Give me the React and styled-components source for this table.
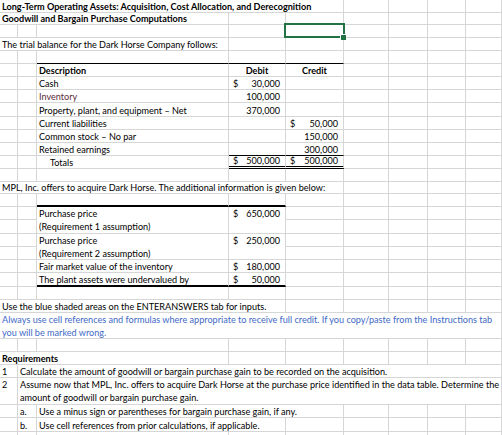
import React from 'react';
import styled, { createGlobalStyle } from 'styled-components';

const COLS = [18, 19, 192, 57, 58, 45, 39, 38, 36];
const ROWS = [13, 12, 13, 13, 13, 13, 13, 13, 14, 13, 13, 13, 13, 13, 12, 13, 13, 14, 13, 13, 13, 14, 13, 13, 13, 13, 13, 13, 13, 14, 13, 13, 14, 13];
const GRID = '#d6d6d6';

const Global = createGlobalStyle`
  html, body { margin: 0; padding: 0; background: #fff; }
  body { font-family: Lato, "Liberation Sans", sans-serif; }
`;

const Sheet = styled.div`
  display: grid;
  grid-template-columns: ${COLS.map((c) => `${c}px`).join(' ')};
  grid-template-rows: ${ROWS.map((r) => `${r}px`).join(' ')};
  width: 502px;
  height: 435px;
  overflow: hidden;
  font-family: Lato, "Liberation Sans", sans-serif;
  font-size: 9.1px;
  color: #000;
  background: #fff;
`;

const bottoms = {
  grid: `1px solid ${GRID}`,
  thin: '1px solid #000',
  thick: '2px solid #000',
  double: '3px double #000',
};

const Cell = styled.div`
  grid-column: ${(p) => `${p.$c} / span ${p.$cs || 1}`};
  grid-row: ${(p) => `${p.$r} / span ${p.$rs || 1}`};
  box-sizing: border-box;
  min-width: 0;
  display: flex;
  align-items: ${(p) => (p.$wrap ? 'flex-start' : 'flex-end')};
  justify-content: ${(p) => (p.$align === 'center' ? 'center' : 'flex-start')};
  padding: 0 2px 0 ${(p) => 2 + (p.$indent || 0)}px;
  border-right: 1px solid ${GRID};
  border-bottom: ${(p) => bottoms[p.$bottom || 'grid']};
  overflow: hidden;
  white-space: nowrap;
  line-height: ${(p) => (p.$wrap ? '13px' : '11px')};
  font-weight: ${(p) => (p.$bold ? 700 : 400)};
  color: ${(p) => p.$color || '#000'};
`;

const AmountCell = styled(Cell)`
  justify-content: space-between;
  padding: 0 5px 0 4px;
`;

const SelectedCell = styled(Cell)`
  position: relative;
  overflow: visible;
  z-index: 2;
  &::before {
    content: '';
    position: absolute;
    left: -2px;
    top: -2px;
    right: -2px;
    bottom: -1px;
    border: 2px solid #217346;
  }
  &::after {
    content: '';
    position: absolute;
    right: -3px;
    bottom: -3px;
    width: 5px;
    height: 5px;
    background: #217346;
    box-shadow: -1px -1px 0 #fff;
  }
`;

const Dollar = styled.span``;
const Value = styled.span``;

const BLUE = '#4169c6';

const cells = [
  { r: 1, c: 1, cs: 5, bold: true, text: 'Long-Term Operating Assets: Acquisition, Cost Allocation, and Derecognition' },
  { r: 2, c: 1, cs: 3, bold: true, text: 'Goodwill and Bargain Purchase Computations' },
  { r: 3, c: 5, selected: true },
  { r: 4, c: 1, cs: 3, text: 'The trial balance for the Dark Horse Company follows:' },
  { r: 5, c: 3, bottom: 'thin' },
  { r: 5, c: 4, bottom: 'thin' },
  { r: 5, c: 5, bottom: 'thin' },
  { r: 6, c: 3, bold: true, text: 'Description' },
  { r: 6, c: 4, bold: true, align: 'center', text: 'Debit' },
  { r: 6, c: 5, bold: true, align: 'center', text: 'Credit' },
  { r: 7, c: 3, text: 'Cash' },
  { r: 7, c: 4, amount: ['$', '30,000'] },
  { r: 8, c: 3, text: 'Inventory', color: '#5e2b3a' },
  { r: 8, c: 4, amount: ['', '100,000'] },
  { r: 9, c: 3, text: 'Property, plant, and equipment \u2013 Net' },
  { r: 9, c: 4, amount: ['', '370,000'] },
  { r: 10, c: 3, text: 'Current liabilities' },
  { r: 10, c: 5, amount: ['$', '50,000'] },
  { r: 11, c: 3, text: 'Common stock \u2013 No par' },
  { r: 11, c: 5, amount: ['', '150,000'] },
  { r: 12, c: 3, text: 'Retained earnings' },
  { r: 12, c: 4, bottom: 'thin' },
  { r: 12, c: 5, amount: ['', '300,000'], bottom: 'thin' },
  { r: 13, c: 3, text: 'Totals', indent: 11 },
  { r: 13, c: 4, amount: ['$', '500,000'], bottom: 'double' },
  { r: 13, c: 5, amount: ['$', '500,000'], bottom: 'double' },
  { r: 15, c: 1, cs: 5, text: 'MPL, Inc. offers to acquire Dark Horse. The additional information is given below:' },
  { r: 16, c: 3, bottom: 'thick' },
  { r: 16, c: 4, bottom: 'thick' },
  { r: 17, c: 3, rs: 2, wrap: true, lines: ['Purchase price', '(Requirement 1 assumption)'] },
  { r: 17, c: 4, rs: 2, wrap: true, amount: ['$', '650,000'] },
  { r: 19, c: 3, rs: 2, wrap: true, lines: ['Purchase price', '(Requirement 2 assumption)'] },
  { r: 19, c: 4, rs: 2, wrap: true, amount: ['$', '250,000'] },
  { r: 21, c: 3, text: 'Fair market value of the inventory' },
  { r: 21, c: 4, amount: ['$', '180,000'] },
  { r: 22, c: 3, text: 'The plant assets were undervalued by', bottom: 'thick' },
  { r: 22, c: 4, amount: ['$', '50,000'], bottom: 'thick' },
  { r: 24, c: 1, cs: 4, text: 'Use the blue shaded areas on the ENTERANSWERS tab for inputs.' },
  {
    r: 25, c: 1, cs: 9, rs: 2, wrap: true, color: BLUE,
    lines: ['Always use cell references and formulas where appropriate to receive full credit. If you copy/paste from the Instructions tab', 'you will be marked wrong.'],
  },
  { r: 28, c: 1, cs: 3, bold: true, text: 'Requirements' },
  { r: 29, c: 1, text: '1' },
  { r: 29, c: 2, cs: 8, text: 'Calculate the amount of goodwill or bargain purchase gain to be recorded on the acquisition.' },
  { r: 30, c: 1, rs: 2, wrap: true, lines: ['2'] },
  {
    r: 30, c: 2, cs: 8, rs: 2, wrap: true,
    lines: ['Assume now that MPL, Inc. offers to acquire Dark Horse at the purchase price identified in the data table. Determine the', 'amount of goodwill or bargain purchase gain.'],
  },
  { r: 32, c: 2, text: 'a.' },
  { r: 32, c: 3, cs: 3, text: 'Use a minus sign or parentheses for bargain purchase gain, if any.' },
  { r: 33, c: 2, text: 'b.' },
  { r: 33, c: 3, cs: 2, text: 'Use cell references from prior calculations, if applicable.' },
];

function buildCells() {
  const taken = new Set();
  cells.forEach((cell) => {
    for (let r = cell.r; r < cell.r + (cell.rs || 1); r += 1) {
      for (let c = cell.c; c < cell.c + (cell.cs || 1); c += 1) taken.add(`${r}-${c}`);
    }
  });
  const all = [...cells];
  for (let r = 1; r <= ROWS.length; r += 1) {
    for (let c = 1; c <= COLS.length; c += 1) {
      if (!taken.has(`${r}-${c}`)) all.push({ r, c });
    }
  }
  return all;
}

function renderCell(cell) {
  const key = `${cell.r}-${cell.c}`;
  const common = {
    key,
    $r: cell.r,
    $c: cell.c,
    $rs: cell.rs,
    $cs: cell.cs,
    $bottom: cell.bottom,
    $bold: cell.bold,
    $align: cell.align,
    $color: cell.color,
    $indent: cell.indent,
    $wrap: cell.wrap,
  };
  if (cell.selected) return <SelectedCell {...common} />;
  if (cell.amount) {
    return (
      <AmountCell {...common}>
        <Dollar>{cell.amount[0]}</Dollar>
        <Value>{cell.amount[1]}</Value>
      </AmountCell>
    );
  }
  if (cell.lines) {
    return (
      <Cell {...common}>
        <div>
          {cell.lines.map((l, i) => (
            <React.Fragment key={i}>
              {i > 0 && <br />}
              {l}
            </React.Fragment>
          ))}
        </div>
      </Cell>
    );
  }
  return <Cell {...common}>{cell.text}</Cell>;
}

export default function App() {
  return (
    <>
      <Global />
      <Sheet>{buildCells().map(renderCell)}</Sheet>
    </>
  );
}
